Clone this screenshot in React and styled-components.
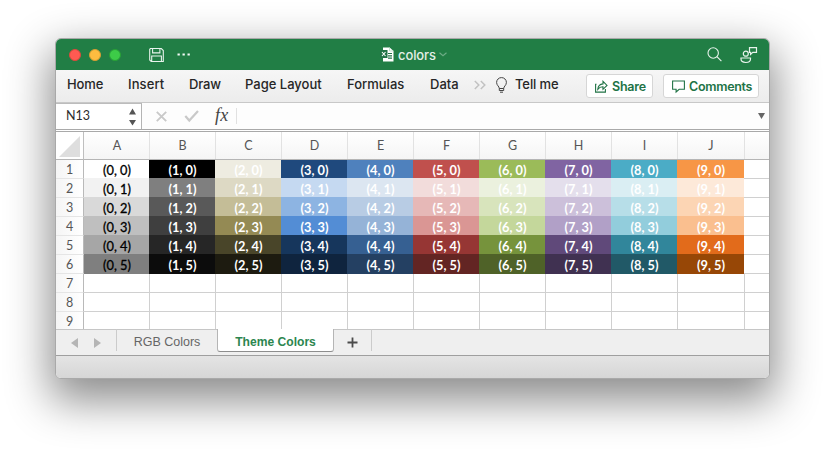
import React from 'react';
import styled, { createGlobalStyle } from 'styled-components';

const GlobalStyle = createGlobalStyle`
  * { box-sizing: border-box; }
  body { margin: 0; background: #fff; overflow: hidden; }
`;

const Desktop = styled.div`
  width: 825px;
  height: 452px;
  padding: 38px 55px 0;
  overflow: hidden;
  background: #fff;
`;

const Window = styled.main`
  width: 715px;
  height: 341px;
  display: flex;
  flex-direction: column;
  overflow: hidden;
  border: 1px solid #a9a9a9;
  border-radius: 6px;
  background: #fff;
  box-shadow: 0 17px 44px 5px rgba(0, 0, 0, 0.45);
  font-family: Inter, sans-serif;
`;

const TitleBar = styled.header`
  height: 31px;
  flex: none;
  display: grid;
  grid-template-columns: 13px 80px 24px 207px 1fr 51px 11px;
  align-items: center;
  background: #217e45;
`;

const Lights = styled.div`
  grid-column: 2;
  display: flex;
  gap: 8px;
`;

const Light = styled.i`
  width: 12px;
  height: 12px;
  border-radius: 50%;
  background: ${(p) => p.$fill};
  border: 1px solid ${(p) => p.$rim};
`;

const QuickTools = styled.div`
  display: flex;
  gap: 13px;
  width: 50px;
`;

const DocTitle = styled.div`
  grid-column: 5;
  display: flex;
  align-items: center;
  color: #e3efe7;
  font-size: 13px;
  font-weight: 500;
  line-height: 16px;
`;

const DocName = styled.span`
  width: 37px;
  margin-left: 4px;
  margin-right: 4px;
  letter-spacing: -0.1px;
`;

const TitleActions = styled.div`
  display: flex;
  gap: 18px;
`;

const Icon = styled.svg`
  display: block;
  flex: none;
  overflow: visible;
  fill: none;
  stroke: currentColor;
`;

const Ribbon = styled.nav`
  height: 33px;
  flex: none;
  display: grid;
  grid-template-columns: 11px 61px 61px 56px 102px 83px 44px 22px 19px 71px 67px 10px 96px;
  align-items: center;
  color: #262626;
  background: linear-gradient(#f6f6f6, #ececec);
  border-bottom: 1px solid #c8c8c8;
`;

const MenuItem = styled.span`
  padding-bottom: 4px;
  font-size: 13px;
  font-weight: 500;
  line-height: 16px;
  letter-spacing: ${(p) => p.$track || 0}px;
  white-space: nowrap;
`;

const RibbonIcon = styled.span`
  color: ${(p) => p.$tone};
  padding-bottom: 3px;
`;

const ActionButton = styled.button`
  height: 24px;
  display: flex;
  align-items: center;
  gap: 4px;
  padding: 1px 0 0 8px;
  border: 1px solid #d6d6d6;
  border-radius: 3px;
  background: #fff;
  color: #217346;
  font: 600 12.5px/16px Inter, sans-serif;
  letter-spacing: ${(p) => p.$track}px;
  white-space: nowrap;
`;

const FormulaBar = styled.section`
  height: 27px;
  flex: none;
  display: flex;
  align-items: stretch;
  margin-bottom: 1px;
  background: #fdfdfd;
  border-bottom: 1px solid #a9a9a9;
`;

const NameBox = styled.div`
  width: 86px;
  display: flex;
  align-items: center;
  justify-content: space-between;
  padding: 0 5px 1px 10px;
  border: 1px solid #b4b4b4;
  border-left: 0;
  border-top-color: #bcbcbc;
  border-bottom: 0;
  background: #fff;
  color: #2c2c2c;
  font: 12.5px/16px Lato, sans-serif;
`;

const FormulaTools = styled.div`
  flex: 1;
  display: flex;
  align-items: center;
  padding-left: 14px;
  padding-right: 4px;
  color: #c9c9c9;
`;

const Fx = styled.span`
  width: 22px;
  margin-left: 15px;
  border-right: 1px solid #e1e1e1;
  padding-bottom: 2px;
  color: #444;
  font: italic 18px/14px "Liberation Serif", serif;
  letter-spacing: 0.3px;
`;

const Expand = styled.span`
  margin-left: auto;
  color: #666;
`;

const Sheet = styled.section`
  height: 198px;
  flex: none;
  overflow: hidden;
  border-top: 1px solid #a9a9a9;
  font-family: Lato, sans-serif;
  display: grid;
  grid-template-columns: 28px 65px repeat(8, 66px) 67px 1fr;
  grid-template-rows: 28px repeat(9, 19px);
`;

const Corner = styled.div`
  display: flex;
  align-items: flex-end;
  justify-content: flex-end;
  padding: 0 3px 2px 0;
  border-right: 1px solid #bfbfbf;
  border-bottom: 1px solid #b5b5b5;
  color: #dedede;
`;

const ColumnHead = styled.div`
  display: flex;
  align-items: center;
  justify-content: center;
  padding-left: 1px;
  border-bottom: 1px solid #b5b5b5;
  box-shadow: inset 1px 0 ${(p) => (p.$first ? 'transparent' : '#e2e2e2')};
  background: linear-gradient(#fff, #f5f5f5);
  color: #555;
  font-size: 12.5px;
  line-height: 16px;
`;

const RowHead = styled.div`
  display: flex;
  align-items: center;
  justify-content: center;
  border-right: 1px solid #b9b9b9;
  border-bottom: 1px solid #e5e5e5;
  background: linear-gradient(90deg, #f5f5f5, #fff);
  color: #555;
  font-size: 12.5px;
  line-height: 16px;
  padding-top: 2px;
`;

/* Filled cells cover the grid line of the row above them. */
const Cell = styled.div`
  display: flex;
  align-items: center;
  justify-content: center;
  margin-top: ${(p) => (p.$top ? 0 : -1)}px;
  padding: ${(p) => (p.$top ? 1 : 2)}px 0 0 1px;
  background: ${(p) => p.$bg};
  color: ${(p) => (p.$dark ? '#000' : '#fff')};
  font-size: 12.8px;
  font-weight: ${(p) => (p.$dark ? 400 : 700)};
  -webkit-text-stroke: ${(p) => (p.$dark ? 0.3 : 0)}px currentColor;
  line-height: 16px;
  white-space: pre;
`;

const EmptyCell = styled.div`
  background: ${(p) => (p.$beside ? 'transparent' : '#fff')};
  border-bottom: 1px solid #d0d0d0;
  box-shadow: inset ${(p) => (p.$first ? 0 : 1)}px 0 #d0d0d0;
`;

const TabStrip = styled.footer`
  height: 27px;
  flex: none;
  display: flex;
  align-items: flex-start;
  background: #efefef;
  border-bottom: 1px solid #9f9f9f;
  font: 13px/16px "Liberation Sans", sans-serif;
`;

const TabArrows = styled.div`
  width: 61px;
  height: 22px;
  display: flex;
  align-items: center;
  gap: 16px;
  padding: 5px 0 0 15px;
  border-top: 1px solid #c6c6c6;
  border-right: 1px solid #cbcbcb;
  color: #b5b5b5;
`;

const Tab = styled.div`
  width: ${(p) => (p.$active ? 117 : 100)}px;
  height: ${(p) => (p.$active ? 23 : 22)}px;
  padding-top: ${(p) => (p.$active ? 5 : 4)}px;
  text-align: center;
  white-space: nowrap;
  background: ${(p) => (p.$active ? '#fff' : 'transparent')};
  color: ${(p) => (p.$active ? '#2c8650' : '#666')};
  font-weight: ${(p) => (p.$active ? 700 : 400)};
  font-size: ${(p) => (p.$active ? 12.1 : 12.5)}px;
  border: solid ${(p) => (p.$active ? '#b5b5b5' : '#c6c6c6')};
  border-width: ${(p) => (p.$active ? '0 1px 1px' : '1px 0 0')};
  border-bottom-color: #8d8d8d;
  border-radius: ${(p) => (p.$active ? '0 0 3px 3px' : 0)};
`;

const AddTab = styled.div`
  width: 38px;
  height: 22px;
  padding: 7px 0 0 13px;
  border-top: 1px solid #c6c6c6;
  border-right: 1px solid #cbcbcb;
  color: #4b4b4b;
`;

const TabFill = styled.div`
  flex: 1;
  border-top: 1px solid #c6c6c6;
`;

const StatusBar = styled.div`
  flex: 1;
  background: linear-gradient(#e4e4e4, #d6d6d6);
`;

const palette = [
  ['#ffffff', '#f2f2f2', '#d9d9d9', '#bfbfbf', '#a6a6a6', '#7f7f7f'],
  ['#000000', '#7f7f7f', '#595959', '#3f3f3f', '#262626', '#0c0c0c'],
  ['#eeece1', '#ddd9c4', '#c4bd97', '#948a54', '#494529', '#1d1b10'],
  ['#1f497d', '#c5d9f1', '#8db4e2', '#538dd5', '#16365c', '#0f243e'],
  ['#4f81bd', '#dce6f1', '#b8cce4', '#95b3d7', '#366092', '#244062'],
  ['#c0504d', '#f2dcdb', '#e6b8b7', '#da9694', '#963634', '#632523'],
  ['#9bbb59', '#ebf1de', '#d8e4bc', '#c4d79b', '#76933c', '#4f6228'],
  ['#8064a2', '#e4dfec', '#ccc0da', '#b1a0c7', '#60497a', '#403151'],
  ['#4bacc6', '#daeef3', '#b7dee8', '#92cddc', '#31869b', '#215967'],
  ['#f79646', '#fde9d9', '#fcd5b4', '#fabf8f', '#e26b1b', '#974706'],
];

const letters = 'ABCDEFGHIJ'.split('');
const rows = [0, 1, 2, 3, 4, 5];
const emptyRows = [7, 8, 9];

const Triangle = ({ w, h, d }) => (
  <Icon width={w} height={h} viewBox={`0 0 ${w} ${h}`}>
    <path d={d} fill="currentColor" stroke="none" />
  </Icon>
);

export default function App() {
  return (
    <Desktop>
      <GlobalStyle />
      <Window>
        <TitleBar>
          <Lights>
            <Light $fill="#ff5a52" $rim="#d94a3c" />
            <Light $fill="#fdbc40" $rim="#d69c33" />
            <Light $fill="#3dcb48" $rim="#279f36" />
          </Lights>
          <QuickTools>
            <Icon width="15" height="14" viewBox="0 0 15 14" color="#e8f3ec">
              <path d="M1.5.5h10.8l2 2v11H2.2L.7 12V1.3zM3.6.8v4.1h7.3V.8M2.7 13.2V8h9.7v5.2" strokeWidth="1.1" />
            </Icon>
            <Icon width="14" height="14" viewBox="0 0 14 14" color="#f4faf6">
              <path d="M.5 6.5h2.3M5.5 6.5h2.3M10.5 6.5h2.3" strokeWidth="2" />
            </Icon>
          </QuickTools>
          <DocTitle>
            <Icon width="14" height="15" viewBox="0 0 14 15">
              <path d="M3 .5h6.7L13.5 4v10.5H3z" fill="#fff" stroke="none" />
              <path d="M9.5.5V4h4" stroke="#b9d8c5" strokeWidth=".8" />
              <path d="M8 6.5h4M8 8.8h4M8 11.2h4" stroke="#217346" strokeWidth="1.2" />
              <path d="M0 3h7.5v8H0z" fill="#217346" stroke="none" />
              <path d="m2 5 3.5 4M5.5 5 2 9" stroke="#fff" strokeWidth="1.1" />
            </Icon>
            <DocName>colors</DocName>
            <Icon width="8" height="5" viewBox="0 0 8 5" color="#6cab84">
              <path d="m.5.8 3.5 3 3.5-3" strokeWidth="1.2" />
            </Icon>
          </DocTitle>
          <TitleActions>
            <Icon width="15" height="15" viewBox="0 0 15 15" color="#e8f3ec">
              <circle cx="6.2" cy="6" r="5.2" strokeWidth="1.1" />
              <path d="m9.9 9.7 4.5 4.5" strokeWidth="1.1" />
            </Icon>
            <Icon width="17" height="16" viewBox="0 0 17 16" color="#e8f3ec" strokeWidth="1.2">
              <circle cx="5.8" cy="6.7" r="2.5" />
              <path d="M1 11h9.5v1c0 2.2-1.8 3.5-4.7 3.5S1 14.2 1 12z" />
              <path d="M9.5.6h7v4.8h-3.7L10.600 7.400V5.400H9.500z" />
            </Icon>
          </TitleActions>
        </TitleBar>

        <Ribbon>
          <span />
          <MenuItem $track={-0.1}>Home</MenuItem>
          <MenuItem $track={0.1}>Insert</MenuItem>
          <MenuItem $track={-0.15}>Draw</MenuItem>
          <MenuItem>Page Layout</MenuItem>
          <MenuItem>Formulas</MenuItem>
          <MenuItem>Data</MenuItem>
          <RibbonIcon $tone="#c2c2c2">
            <Icon width="12" height="10" viewBox="0 0 12 10">
              <path d="m.8 1 4 4-4 4M6.8 1l4 4-4 4" strokeWidth="1.5" />
            </Icon>
          </RibbonIcon>
          <RibbonIcon $tone="#444">
            <Icon width="11" height="16" viewBox="0 0 11 16">
              <path d="M3.3 11.500c0-2.200-2.700-3-2.700-6.100A4.800 4.800 0 0 1 5.500.6a4.800 4.800 0 0 1 4.900 4.800c0 3.100-2.700 3.900-2.700 6.100zM3.300 11.500v2h4.400v-2M4 15.200h3" />
            </Icon>
          </RibbonIcon>
          <MenuItem $track={-0.1}>Tell me</MenuItem>
          <ActionButton $track={-0.25}>
            <Icon width="13" height="13" viewBox="0 0 13 13">
              <path d="M1.5 4.200H.6v7.900h9.800V9M2.800 9.300c.3-3.200 2-5.200 5.200-5.400V1.400l4 4-4 3.900V6.800C5.900 6.700 4.300 7.400 2.800 9.300z" strokeWidth="1.1" />
            </Icon>
            Share
          </ActionButton>
          <span />
          <ActionButton $track={-0.3}>
            <Icon width="13" height="13" viewBox="0 0 13 13">
              <path d="M.6 1h11.800v8.300H7.200L4.100 12V9.300H.6z" strokeWidth="1.1" />
            </Icon>
            Comments
          </ActionButton>
        </Ribbon>

        <FormulaBar>
          <NameBox>
            N13
            <Icon width="7" height="19" viewBox="0 0 7 19">
              <path d="M3.5 1.500 7 7.500H0zM3.500 18.500 0 13h7z" fill="#555" stroke="none" />
            </Icon>
          </NameBox>
          <FormulaTools>
            <Icon width="11" height="11" viewBox="0 0 11 11">
              <path d="m.8.8 9.400 9.400M10.200.8.8 10.200" strokeWidth="1.9" />
            </Icon>
            <Icon width="33" height="12" viewBox="-18 0 33 12">
              <path d="m.3 6 4 4.500L13 1" strokeWidth="2.2" />
            </Icon>
            <Fx>fx</Fx>
            <Expand><Triangle w={7} h={6} d="M0 0h7L3.5 6z" /></Expand>
          </FormulaTools>
        </FormulaBar>

        <Sheet>
          <Corner><Triangle w={21} h={21} d="M21 0v21H0z" /></Corner>
          {letters.map((l, i) => <ColumnHead key={l} $first={i === 0}>{l}</ColumnHead>)}
          <ColumnHead />
          {rows.map((r) => (
            <React.Fragment key={r}>
              <RowHead>{r + 1}</RowHead>
              {palette.map((shades, c) => (
                <Cell key={c} $top={r === 0} $bg={shades[r]} $dark={c === 0}>
                  {`(${c}, ${r})`}
                </Cell>
              ))}
              <EmptyCell $first $beside />
            </React.Fragment>
          ))}
          {emptyRows.map((r) => (
            <React.Fragment key={r}>
              <RowHead>{r}</RowHead>
              {letters.map((l, i) => <EmptyCell key={l} $first={i === 0} />)}
              <EmptyCell />
            </React.Fragment>
          ))}
        </Sheet>

        <TabStrip>
          <TabArrows>
            <Triangle w={7} h={10} d="M7 0v10L0 5z" />
            <Triangle w={7} h={10} d="M0 0v10l7-5z" />
          </TabArrows>
          <Tab>RGB Colors</Tab>
          <Tab $active>Theme Colors</Tab>
          <AddTab>
            <Icon width="11" height="11" viewBox="0 0 11 11">
              <path d="M5.5.5v10M.5 5.5h10" strokeWidth="1.8" />
            </Icon>
          </AddTab>
          <TabFill />
        </TabStrip>
        <StatusBar />
      </Window>
    </Desktop>
  );
}
